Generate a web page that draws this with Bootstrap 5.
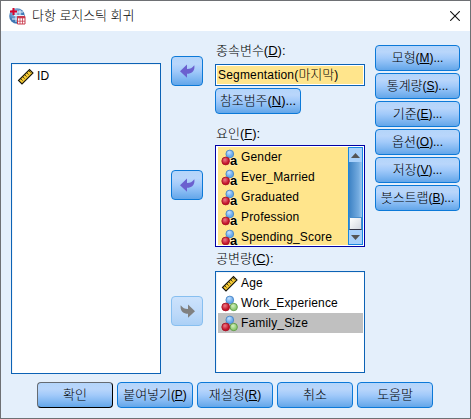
<!DOCTYPE html>
<html lang="ko">
<head>
<meta charset="utf-8">
<meta name="viewport" content="width=device-width, initial-scale=1">
<title>다항 로지스틱 회귀</title>
<link href="https://cdn.jsdelivr.net/npm/bootstrap@5.3.0/dist/css/bootstrap.min.css" rel="stylesheet">
<style>
body{background:#6e7074;font-family:"Liberation Sans","Noto Sans CJK KR",sans-serif;font-size:13px;font-weight:300;line-height:20px;color:#000;overflow:hidden}
.dialog-win{width:469px;height:417px;margin:1px;background:#e4effb}
.title-bar{height:30px;background:#fff;padding:0 10px 0 8px;font-size:13px}
.title-text{margin-left:6px;letter-spacing:-.05px}
.work-area{height:351px;padding-left:10px}
.source-col{width:150px;padding-top:32px}
.move-col{width:32px;margin-left:10px;padding-top:25px}
.target-col{width:150px;margin-left:12px;padding-top:10px}
.option-col{width:85px;margin-left:10px;padding-top:14px;gap:2px}
.box{border:1px solid #0c62b5;background:#fff;box-shadow:inset 1px 1px #f0f4f8}
.source-box{height:311px;padding:2px}
.field-label{height:20px;line-height:20px;padding-left:1px;white-space:nowrap}
.field-box{height:22px;margin-top:3px;border:1px solid #0c62b5;background:#fff;padding:1px}
.field-value{height:18px;line-height:18px;background:#ffe58c;padding-left:1px}
.factor-box{height:102px;border:1px solid #0000a5;background:#fff;padding:1px 1px 1px 2px;overflow:hidden}
.factor-list{background:#ffe58c;width:130px;height:98px;overflow:hidden}
.cov-box{height:102px;padding:1px 1px 1px 2px}
.var-row{height:20px;line-height:20px;padding-left:3px;font-size:12px;white-space:nowrap;letter-spacing:.16px}
.var-row svg{width:17px;height:17px;margin-right:3px;flex:none}
.picked{background:#c0c0c0}
.en{font-size:12px}
.field-value .en{letter-spacing:.18px}
.btn.face{--bs-btn-padding-x:0;--bs-btn-padding-y:0;--bs-btn-font-size:13px;--bs-btn-font-weight:300;--bs-btn-line-height:24px;--bs-btn-border-radius:4px;--bs-btn-color:#000;height:26px;border:1px solid #0c79d8;background:linear-gradient(#b4d5fa 0,#b9d6fb 25%,#a2cafa 50%,#82b8f2 76%,#63a6e9 100%);white-space:nowrap;letter-spacing:-.05px}
.btn.move{height:30px;width:32px;display:flex;align-items:center;justify-content:center}
.btn.move.face-off{opacity:1;border-color:#87bff0;background:linear-gradient(#cce2fc,#bdd9f9 60%,#abd0f6)}
.btn.ok{border-color:#656b72 #000 #000 #656b72}
.gap-a{margin-top:84px}.gap-b{margin-top:96px}
.ref-btn{width:86px;margin-top:2px}
.factor-label{margin-top:10px;margin-bottom:1px}
.cov-label{margin-top:2px;margin-bottom:2px}
.foot{height:36px;padding-left:36px;gap:4px}
.foot .btn{width:76px}
.scroll-track{width:15px;height:98px;margin-left:auto;border:1px solid #1787e0;background:linear-gradient(90deg,#3d82c4,#75ace0 75%,#9bc7f0)}
.scroll-end{height:14px;background:#a9d1fb;flex:none}
.scroll-thumb{height:13px;margin-top:auto;border:1px solid #4a8dcb;border-bottom-color:#334;background:linear-gradient(135deg,#fff,#d4d7e0)}
</style>
<script src="https://cdn.jsdelivr.net/npm/bootstrap@5.3.0/dist/js/bootstrap.bundle.min.js"></script>
</head>
<body>
<svg class="position-absolute" width="0" height="0" aria-hidden="true">
<defs>
<radialGradient id="gb" cx=".4" cy=".3"><stop offset="0" stop-color="#c5e2ff"/><stop offset="1" stop-color="#6ba9ea"/></radialGradient>
<radialGradient id="gr" cx=".4" cy=".35"><stop offset="0" stop-color="#ec7886"/><stop offset="1" stop-color="#c3142b"/></radialGradient>
<radialGradient id="gg" cx=".4" cy=".35"><stop offset="0" stop-color="#d4efbf"/><stop offset="1" stop-color="#90cb72"/></radialGradient>
<radialGradient id="globe" cx=".4" cy=".3"><stop offset="0" stop-color="#a7c9e8"/><stop offset="1" stop-color="#3f77b4"/></radialGradient>
</defs>
<symbol id="ruler" viewBox="0 0 17 17"><path d="M1.500 12.500 12.500 1.500 16 5 5 16Z" fill="#f5c932" stroke="#17150c" stroke-width="1.1"/><path d="m4 11 1.600 1.600M6 9l1.600 1.600M8 7l1.600 1.600M10 5l1.600 1.600M12 3l1.600 1.600" stroke="#3d3210" stroke-width=".9"/></symbol>
<symbol id="balls" viewBox="0 0 17 17"><circle cx="8.8" cy="5" r="3.9" fill="url(#gb)" stroke="#4480c0" stroke-width=".8"/><circle cx="12.7" cy="12" r="3.7" fill="url(#gg)" stroke="#57933f" stroke-width=".8"/><circle cx="4.7" cy="12" r="3.9" fill="url(#gr)" stroke="#a31225" stroke-width=".8"/></symbol>
<symbol id="nominal" viewBox="0 0 17 17"><circle cx="8.8" cy="5" r="3.9" fill="url(#gb)" stroke="#4480c0" stroke-width=".8"/><circle cx="4.7" cy="12" r="3.9" fill="url(#gr)" stroke="#a31225" stroke-width=".8"/><text x="9" y="16" font-family="Liberation Sans, sans-serif" font-size="13" font-weight="700" fill="#000" stroke="#fff3c2" stroke-width="1.2" paint-order="stroke">a</text></symbol>
<symbol id="arrow" viewBox="0 0 15 14"><path d="M0 7.200 7 .6V5c3 .1 5-.8 7.300-3.700.8 5-2.100 8.300-7.300 8.500v4Z"/></symbol>
</svg>
<main class="dialog-win d-flex flex-column">
<header class="title-bar d-flex align-items-center">
<svg width="17" height="17" viewBox="0 0 17 17"><circle cx="8" cy="8" r="7.800" fill="url(#globe)"/><path d="M5 4h9M5 7.500h10M3 11h7M7 3v11M11 2v7" stroke="#e6f1fb" stroke-width="1" fill="none"/><path d="M4.500 0v7M1 3.500h7" stroke="#d9042c" stroke-width="2"/><path d="M8.500 8.500H16V16H8.500Z" fill="#fff" stroke="#c93a4c"/><path d="M8.500 9.300H16" stroke="#c93a4c" stroke-width="2"/><path d="M8.500 13.200H16M11 10v6M13.500 10v6" stroke="#c93a4c" stroke-width=".8"/></svg>
<span class="title-text">다항 로지스틱 회귀</span>
<svg class="ms-auto" width="10" height="10" viewBox="0 0 10 10"><path d="m.2.200 9.600 9.600m0-9.600L.2 9.800" stroke="#111" stroke-width="1.100"/></svg>
</header>
<section class="work-area d-flex">
<div class="source-col"><div class="box source-box"><div class="var-row d-flex align-items-center"><svg><use href="#ruler"/></svg>ID</div></div></div>
<div class="move-col">
<button class="btn face move"><svg width="15" height="14" fill="#6b60cf"><use href="#arrow"/></svg></button>
<button class="btn face move gap-a"><svg width="15" height="14" fill="#6b60cf"><use href="#arrow"/></svg></button>
<button class="btn face move face-off gap-b" aria-disabled="true"><svg width="15" height="14" viewBox="0 0 15 14" fill="#808080"><path d="M15 7.200 8 .6V5C5 5.100 3 4.200.7 1.300-.1 6.300 2.800 9.600 8 9.800v4Z"/></svg></button>
</div>
<div class="target-col">
<div class="field-label">종속변수(<u>D</u>):</div>
<div class="field-box"><div class="field-value"><span class="en">Segmentation(</span>마지막<span class="en">)</span></div></div>
<button class="btn face ref-btn d-block">참조범주(<u>N</u>)...</button>
<div class="field-label factor-label">요인(<u>F</u>):</div>
<div class="factor-box d-flex">
<div class="factor-list">
<div class="var-row d-flex align-items-center"><svg><use href="#nominal"/></svg>Gender</div>
<div class="var-row d-flex align-items-center"><svg><use href="#nominal"/></svg>Ever_Married</div>
<div class="var-row d-flex align-items-center"><svg><use href="#nominal"/></svg>Graduated</div>
<div class="var-row d-flex align-items-center"><svg><use href="#nominal"/></svg>Profession</div>
<div class="var-row d-flex align-items-center"><svg><use href="#nominal"/></svg>Spending_Score</div>
</div>
<div class="scroll-track d-flex flex-column">
<div class="scroll-end d-flex align-items-center justify-content-center"><svg width="9" height="5"><path d="M0 5 4.500 0 9 5Z" fill="#555"/></svg></div>
<div class="scroll-thumb"></div>
<div class="scroll-end d-flex align-items-center justify-content-center"><svg width="9" height="5"><path d="M0 0h9L4.500 5Z" fill="#555"/></svg></div>
</div>
</div>
<div class="field-label cov-label">공변량(<u>C</u>):</div>
<div class="box cov-box">
<div class="var-row d-flex align-items-center"><svg><use href="#ruler"/></svg>Age</div>
<div class="var-row d-flex align-items-center"><svg><use href="#balls"/></svg>Work_Experience</div>
<div class="var-row d-flex align-items-center picked"><svg><use href="#balls"/></svg>Family_Size</div>
</div>
</div>
<div class="option-col d-flex flex-column">
<button class="btn face">모형<span class="en">(<u>M</u>)...</span></button>
<button class="btn face">통계량<span class="en">(<u>S</u>)...</span></button>
<button class="btn face">기준<span class="en">(<u>E</u>)...</span></button>
<button class="btn face">옵션<span class="en">(<u>O</u>)...</span></button>
<button class="btn face">저장<span class="en">(<u>V</u>)...</span></button>
<button class="btn face">붓스트랩<span class="en">(<u>B</u>)...</span></button>
</div>
</section>
<footer class="foot d-flex">
<button class="btn face ok">확인</button>
<button class="btn face">붙여넣기<span class="en">(<u>P</u>)</span></button>
<button class="btn face">재설정<span class="en">(<u>R</u>)</span></button>
<button class="btn face">취소</button>
<button class="btn face">도움말</button>
</footer>
</main>
</body>
</html>
